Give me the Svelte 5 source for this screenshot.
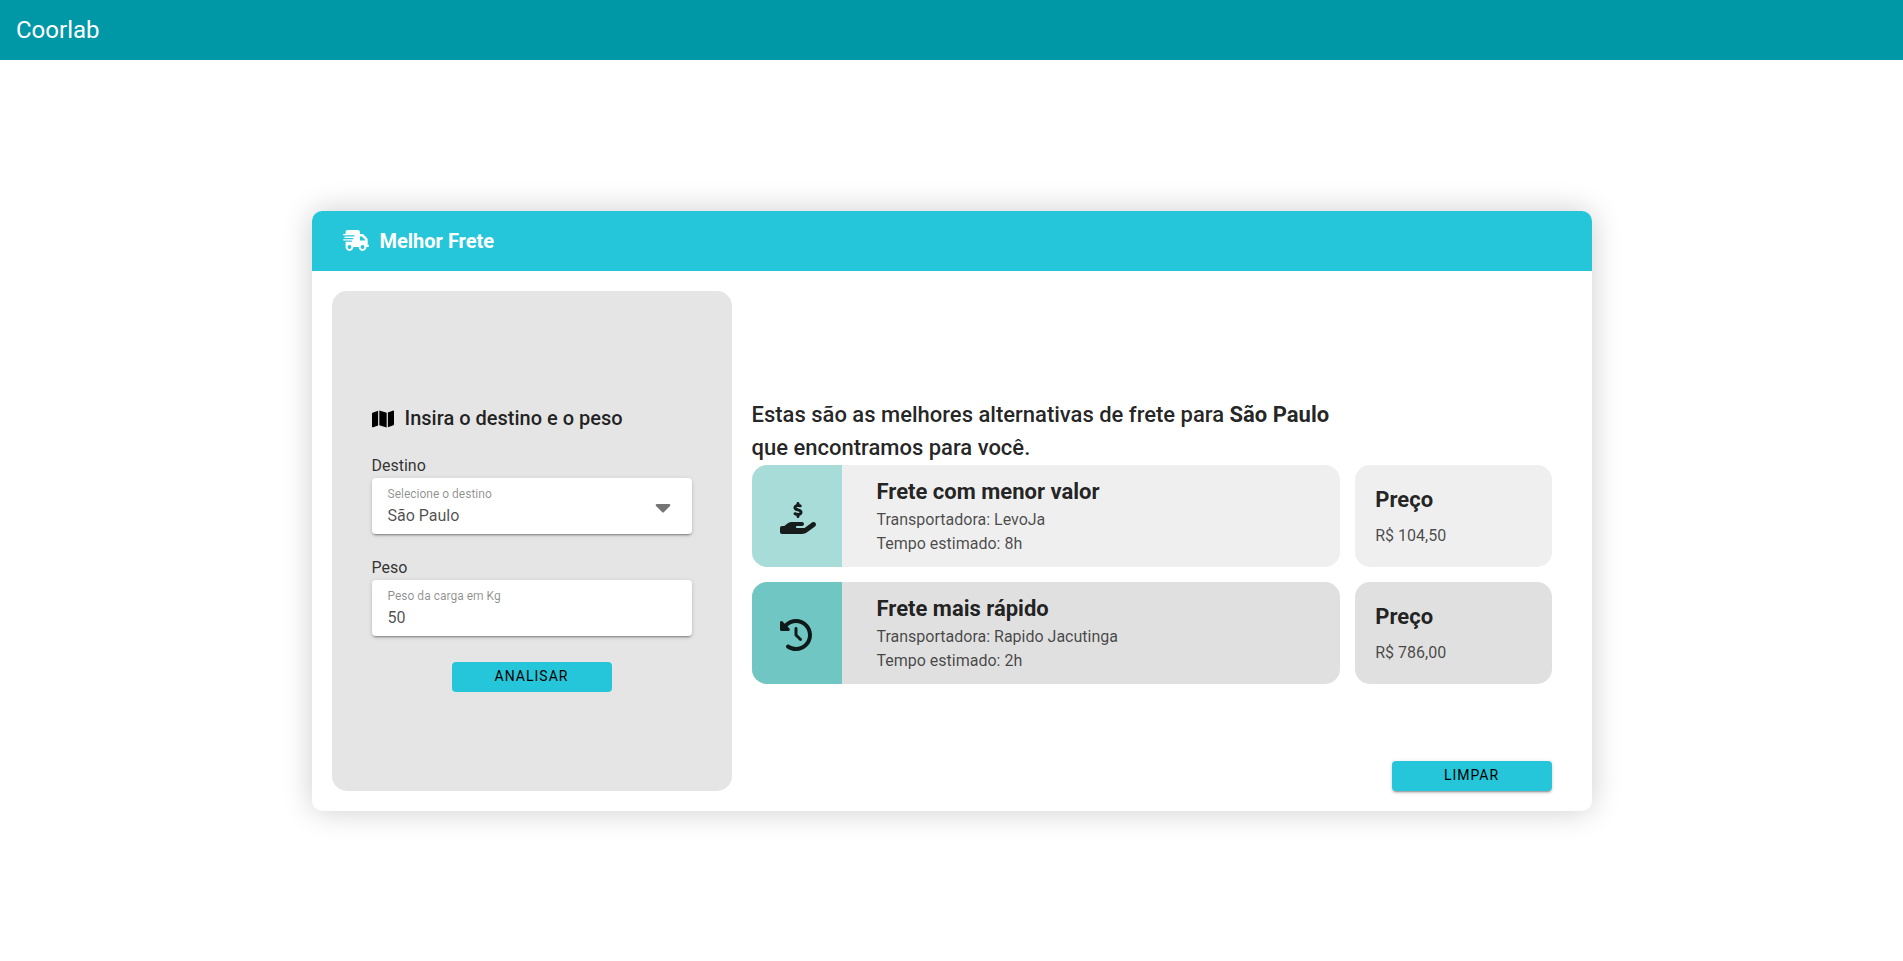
<script>
  const cities = ['São Paulo'];

  let destination = $state('São Paulo');
  let weight = $state('50');

  const offers = [
    {
      kind: 'cheap',
      title: 'Frete com menor valor',
      carrier: 'LevoJa',
      time: '8h',
      price: 'R$ 104,50',
      viewBox: '0 0 576 512',
      icon: 'M312 24V34.5c6.4 1.2 12.6 2.7 18.2 4.2c12.8 3.4 20.4 16.6 17 29.4s-16.6 20.4-29.4 17c-10.9-2.9-21.1-4.9-30.2-5c-7.3-.1-14.7 1.7-19.4 4.4c-2.1 1.3-3.1 2.4-3.5 3c-.3 .5-.7 1.2-.7 2.8c0 .3 0 .5 0 .6c.2 .2 .9 1.2 3.3 2.6c5.8 3.5 14.4 6.2 27.4 10.1l.9 .3c11.1 3.3 25.9 7.8 37.9 15.3c13.7 8.6 26.1 22.9 26.4 44.9c.3 22.5-11.4 38.9-26.7 48.5c-6.7 4.1-13.9 7-21.3 8.8V232c0 13.3-10.7 24-24 24s-24-10.7-24-24V220.6c-9.5-2.3-18.2-5.3-25.6-7.8c-2.1-.7-4.1-1.4-6-2c-12.6-4.2-19.4-17.8-15.2-30.4s17.8-19.4 30.4-15.2c2.6 .9 5 1.7 7.3 2.5c13.6 4.6 23.4 7.9 33.9 8.3c8 .3 15.1-1.6 19.2-4.1c1.9-1.2 2.8-2.2 3.2-2.9c.4-.6 .9-1.8 .8-4.1l0-.2c0-1 0-2.1-4-4.6c-5.7-3.6-14.3-6.4-27.1-10.3l-1.9-.6c-10.8-3.2-25-7.5-36.4-14.4c-13.5-8.1-26.5-22-26.6-44.1c-.1-22.9 12.9-38.6 27.7-47.4c6.4-3.8 13.3-6.4 20.2-8.2V24c0-13.3 10.7-24 24-24s24 10.7 24 24zM568.2 336.3c13.1 17.8 9.3 42.8-8.5 55.9L433.1 485.5c-23.4 17.2-51.6 26.5-80.7 26.5H192 32c-17.7 0-32-14.3-32-32V416c0-17.7 14.3-32 32-32H68.8l44.9-36c22.7-18.2 50.9-28 80-28H272h16 64c17.7 0 32 14.3 32 32s-14.3 32-32 32H288 272c-8.8 0-16 7.2-16 16s7.2 16 16 16H392.6l119.7-88.2c17.8-13.1 42.8-9.3 55.9 8.5z'
    },
    {
      kind: 'fast',
      title: 'Frete mais rápido',
      carrier: 'Rapido Jacutinga',
      time: '2h',
      price: 'R$ 786,00',
      viewBox: '0 0 512 512',
      icon: 'M75 75L41 41C25.9 25.9 0 36.6 0 57.9V168c0 13.3 10.7 24 24 24H134.1c21.4 0 32.1-25.9 17-41l-30.8-30.8C155 85.5 203 64 256 64c106 0 192 86 192 192s-86 192-192 192c-40.8 0-78.6-12.7-109.7-34.4c-14.5-10.1-34.4-6.6-44.6 7.9s-6.6 34.4 7.9 44.6C151.2 495 201.7 512 256 512c141.4 0 256-114.6 256-256S397.4 0 256 0C185.3 0 121.3 28.7 75 75zm181 53c-13.3 0-24 10.7-24 24V256c0 6.4 2.5 12.5 7 17l72 72c9.4 9.4 24.6 9.4 33.9 0s9.4-24.6 0-33.9l-65-65V152c0-13.3-10.7-24-24-24z'
    }
  ];
</script>

<header class="app-bar">Coorlab</header>

<main>
  <section class="card">
    <div class="card-head">
      <svg class="truck" viewBox="0 0 640 512" aria-hidden="true">
        <path d="M112 0C85.5 0 64 21.5 64 48V96H16c-8.8 0-16 7.2-16 16s7.2 16 16 16H64 272c8.8 0 16 7.2 16 16s-7.2 16-16 16H64 48c-8.8 0-16 7.2-16 16s7.2 16 16 16H64 240c8.8 0 16 7.2 16 16s-7.2 16-16 16H64 16c-8.8 0-16 7.2-16 16s7.2 16 16 16H64 208c8.8 0 16 7.2 16 16s-7.2 16-16 16H64V416c0 53 43 96 96 96s96-43 96-96H384c0 53 43 96 96 96s96-43 96-96h32c17.7 0 32-14.3 32-32s-14.3-32-32-32V288 256 237.3c0-17-6.7-33.3-18.7-45.3L512 114.7c-12-12-28.3-18.7-45.3-18.7H416V48c0-26.5-21.5-48-48-48H112zM544 237.3V256H416V160h50.7L544 237.3zM160 368a48 48 0 1 1 0 96 48 48 0 1 1 0-96zm272 48a48 48 0 1 1 96 0 48 48 0 1 1 -96 0z" />
      </svg>
      <h1>Melhor Frete</h1>
    </div>

    <div class="card-body">
      <form class="panel" onsubmit={(e) => e.preventDefault()}>
        <h2>
          <svg class="map" viewBox="0 0 576 512" aria-hidden="true">
            <path d="M384 476.1L192 421.2V35.9L384 90.8V476.1zm32-1.2V88.4L543.1 37.5c15.8-6.3 32.9 5.3 32.9 22.3V394.6c0 9.8-6 18.6-15.1 22.3L416 474.8zM15.1 95.1L160 37.2V423.6L32.9 474.5C17.1 480.8 0 469.2 0 452.2V117.4c0-9.8 6-18.6 15.1-22.3z" />
          </svg>
          Insira o destino e o peso
        </h2>

        <label class="name" for="destination">Destino</label>
        <div class="field">
          <label class="hint" for="destination">Selecione o destino</label>
          <select id="destination" bind:value={destination}>
            {#each cities as city}
              <option>{city}</option>
            {/each}
          </select>
          <svg class="caret" viewBox="0 0 16 10" aria-hidden="true">
            <path d="M2 0H14Q16 0 15 2L9 8Q8 9 7 8L1 2Q0 0 2 0Z" />
          </svg>
        </div>

        <label class="name" for="weight">Peso</label>
        <div class="field">
          <label class="hint" for="weight">Peso da carga em Kg</label>
          <input id="weight" type="text" inputmode="numeric" bind:value={weight} />
        </div>

        <button class="btn flat" type="submit">Analisar</button>
      </form>

      <section class="results">
        <div class="offers">
          <p class="intro">
            Estas são as melhores alternativas de frete para <strong>{destination}</strong> que encontramos para você.
          </p>
          {#each offers as offer}
            <div class="offer {offer.kind}">
              <div class="summary">
                <div class="icon">
                  <svg viewBox={offer.viewBox} aria-hidden="true"><path d={offer.icon} /></svg>
                </div>
                <div class="text">
                  <h3>{offer.title}</h3>
                  <p>Transportadora: {offer.carrier}</p>
                  <p>Tempo estimado: {offer.time}</p>
                </div>
              </div>
              <div class="price">
                <h3>Preço</h3>
                <p>{offer.price}</p>
              </div>
            </div>
          {/each}
        </div>
        <button class="btn clear" type="button">Limpar</button>
      </section>
    </div>
  </section>
</main>

<style>
  :global(body) {
    margin: 0;
    background: #fff;
    color: rgba(0, 0, 0, 0.87);
    font-family: Roboto, sans-serif;
    font-size: 16px;
    line-height: 24px;
  }

  h1, h2, h3, p {
    margin: 0;
  }

  .app-bar {
    display: flex;
    align-items: center;
    height: 60px;
    padding: 0 16px;
    background: #0097a7;
    color: #fff;
    font-size: 24px;
  }

  main {
    display: flex;
    align-items: center;
    justify-content: center;
    box-sizing: border-box;
    min-height: calc(100vh - 60px);
    padding: 20px;
  }

  .card {
    width: 100%;
    max-width: 1280px;
    border-radius: 10px;
    background: #fff;
    box-shadow: 0 0 30px rgba(0, 0, 0, 0.2);
    overflow: hidden;
  }

  .card-head {
    display: flex;
    align-items: center;
    gap: 11px;
    height: 60px;
    padding: 0 31px;
    background: #26c6da;
    color: #fff;
  }

  h1 {
    font-size: 20px;
    font-weight: 700;
  }

  svg {
    display: block;
    fill: currentColor;
  }

  .truck {
    width: 26px;
    height: 21px;
  }

  .card-body {
    display: grid;
    grid-template-columns: 1fr 2fr;
    gap: 20px;
    padding: 20px 40px 20px 20px;
  }

  .panel {
    display: flex;
    flex-direction: column;
    justify-content: center;
    box-sizing: border-box;
    min-height: 500px;
    padding: 40px;
    border-radius: 15px;
    background: #e5e5e5;
  }

  h2 {
    display: flex;
    align-items: center;
    gap: 11px;
    margin-bottom: 8px;
    font-size: 20px;
    font-weight: 500;
    line-height: 56px;
  }

  .map {
    width: 22px;
    height: 20px;
    padding-top: 2px;
    color: #000;
  }

  .name {
    color: rgba(0, 0, 0, 0.8);
  }

  .field {
    display: grid;
    grid-template-columns: 1fr auto;
    height: 56px;
    margin-bottom: 22px;
    border-radius: 4px;
    background: #fff;
    box-shadow: 0 3px 1px -2px rgba(0, 0, 0, 0.2), 0 2px 2px rgba(0, 0, 0, 0.14), 0 1px 5px rgba(0, 0, 0, 0.12);
  }

  .hint {
    grid-area: 1 / 1;
    z-index: 1;
    justify-self: start;
    align-self: start;
    padding: 6px 16px 0;
    color: rgba(0, 0, 0, 0.45);
    font-size: 12px;
    line-height: 20px;
  }

  .field select,
  .field input {
    grid-area: 1 / 1 / 2 / 3;
    box-sizing: border-box;
    width: 100%;
    height: 56px;
    padding: 20px 16px 0;
    border: 0;
    border-radius: 4px;
    background: transparent;
    color: rgba(0, 0, 0, 0.7);
    font: inherit;
    appearance: none;
    outline: none;
  }

  .caret {
    grid-area: 1 / 2;
    align-self: center;
    width: 16px;
    height: 10px;
    margin: 6px 21px 0 0;
    color: #757575;
    pointer-events: none;
  }

  .btn {
    width: 160px;
    height: 30px;
    padding: 0 0 2px;
    border: 0;
    border-radius: 4px;
    background: #26c6da;
    color: #000;
    font-family: inherit;
    font-size: 14px;
    font-weight: 400;
    letter-spacing: 1px;
    text-transform: uppercase;
    cursor: pointer;
  }

  .flat {
    align-self: center;
    margin-top: 4px;
  }

  .results {
    display: grid;
    grid-template-rows: 1fr auto 1fr;
  }

  .offers {
    display: grid;
    grid-row: 2;
    gap: 15px;
  }

  .intro {
    max-width: 600px;
    margin-bottom: -14px;
    font-size: 22px;
    font-weight: 500;
    line-height: 33px;
  }

  .offer {
    display: grid;
    grid-template-columns: 3fr 1fr;
    gap: 15px;
    min-height: 102px;
  }

  .summary {
    display: flex;
    border-radius: 15px;
    overflow: hidden;
  }

  .icon {
    display: flex;
    align-items: center;
    width: 62px;
    padding: 4px 0 0 28px;
  }

  .icon svg {
    height: 32px;
  }

  .text {
    display: flex;
    flex-direction: column;
    justify-content: center;
    padding-left: 35px;
  }

  .price {
    display: flex;
    flex-direction: column;
    justify-content: center;
    gap: 8px;
    padding: 0 20px;
    border-radius: 15px;
  }

  .cheap .summary,
  .cheap .price {
    background: #efefef;
  }

  .cheap .icon {
    background: #a8dcd9;
  }

  .fast .summary,
  .fast .price {
    background: #e0e0e0;
  }

  .fast .icon {
    background: #70c6c3;
  }

  h3 {
    font-size: 22px;
    font-weight: 700;
    line-height: 33px;
  }

  .offer p {
    color: rgba(0, 0, 0, 0.7);
  }

  .clear {
    grid-row: 3;
    align-self: end;
    justify-self: end;
    box-shadow: 0 3px 1px -2px rgba(0, 0, 0, 0.2), 0 2px 2px rgba(0, 0, 0, 0.14), 0 1px 5px rgba(0, 0, 0, 0.12);
  }
</style>
